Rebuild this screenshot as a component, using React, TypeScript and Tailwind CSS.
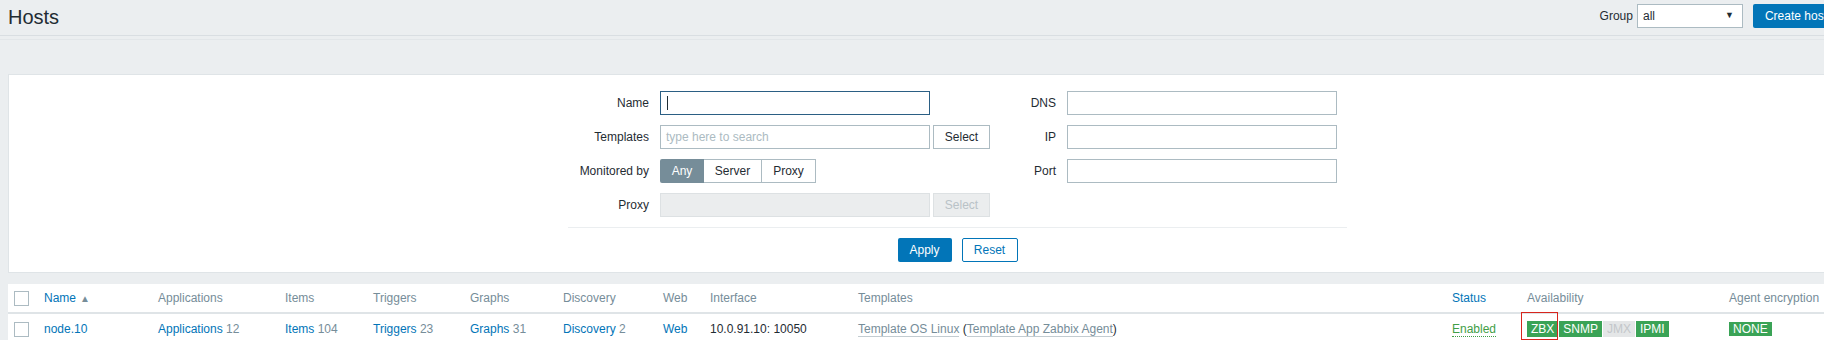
import React from 'react'

const cols =
  'grid grid-cols-[30px_114px_127px_88px_97px_93px_100px_47px_148px_594px_75px_202px_1fr] items-center'

function Box({ className = '', children }: { className?: string; children?: React.ReactNode }) {
  return (
    <div className={`w-[270px] h-[24px] border border-[#acbbc2] bg-white flex items-center px-[5px] ${className}`}>
      {children}
    </div>
  )
}

function Check() {
  return <div className="w-[15px] h-[15px] border border-[#acbbc2] bg-white" />
}

function Badge({ label, off }: { label: string; off?: boolean }) {
  return (
    <span
      className={`h-[16px] leading-[16px] px-[4px] text-[12px] ${
        off ? 'bg-[#e4e6e7] text-[#c3c7ca]' : 'bg-[#3aa356] text-white'
      }`}
    >
      {label}
    </span>
  )
}

function Row({ label, width, children }: { label: string; width: string; children?: React.ReactNode }) {
  return (
    <div className="flex items-center h-[24px]">
      <div className={`${width} mr-[11px] text-right text-[#1f2c33]`}>{label}</div>
      {children}
    </div>
  )
}

export default function App() {
  return (
    <div className="w-full h-[340px] overflow-hidden bg-[#ebeef0] font-['Liberation_Sans',Arial,sans-serif] text-[12px] text-[#1f2c33]">
      <div className="w-[1847px] relative">
        {/* header */}
        <div className="h-[36px] border-b border-[#d9dee2] px-[8px] flex justify-between items-start">
          <h1 className="pt-[7px] text-[20px] leading-[20px] text-[#1f2c33]">Hosts</h1>
          <div className="mt-[4px] flex items-center">
            <span className="mr-[4px]">Group</span>
            <div className="w-[106px] h-[24px] border border-[#acbbc2] bg-white flex items-center justify-between pl-[5px] pr-[8px]">
              <span>all</span>
              <span className="text-[9px] text-[#1f2c33]">▼</span>
            </div>
            <button className="ml-[10px] h-[24px] px-[12px] bg-[#0275b8] text-white rounded-[2px] whitespace-nowrap">
              Create host
            </button>
          </div>
        </div>
        <div className="mt-[3px] h-px bg-[#e2e6e9]" />

        {/* filter */}
        <div className="mt-[34px] mx-[8px] border border-[#dfe4e7] bg-white pt-[16px] pb-[10px]">
          <div className="ml-[559px] w-[779px]">
            <div className="flex">
              {/* left column */}
              <div className="flex flex-col gap-[10px] w-[422px]">
                <Row label="Name" width="w-[81px]">
                  <div className="w-[270px] h-[24px] border border-[#2b5f84] bg-white flex items-center px-[6px]">
                    <div className="w-px h-[14px] bg-[#1f2c33]" />
                  </div>
                </Row>
                <Row label="Templates" width="w-[81px]">
                  <Box>
                    <span className="text-[#acbbc2]">type here to search</span>
                  </Box>
                  <div className="ml-[3px] w-[57px] h-[24px] border border-[#acbbc2] bg-white flex items-center justify-center">
                    Select
                  </div>
                </Row>
                <Row label="Monitored by" width="w-[81px]">
                  <div className="flex h-[24px]">
                    <div className="w-[44px] bg-[#768d99] text-white flex items-center justify-center rounded-l-[2px]">Any</div>
                    <div className="w-[58px] border-y border-r border-[#acbbc2] bg-white flex items-center justify-center">Server</div>
                    <div className="w-[54px] border-y border-r border-[#acbbc2] bg-white flex items-center justify-center">Proxy</div>
                  </div>
                </Row>
                <Row label="Proxy" width="w-[81px]">
                  <div className="w-[270px] h-[24px] border border-[#dde1e3] bg-[#ebedee]" />
                  <div className="ml-[3px] w-[57px] h-[24px] border border-[#dde1e3] bg-[#ebedee] text-[#b9c2c7] flex items-center justify-center">
                    Select
                  </div>
                </Row>
              </div>

              {/* right column */}
              <div className="flex flex-col gap-[10px]">
                <Row label="DNS" width="w-[66px]">
                  <Box />
                </Row>
                <Row label="IP" width="w-[66px]">
                  <Box />
                </Row>
                <Row label="Port" width="w-[66px]">
                  <Box />
                </Row>
              </div>
            </div>

            <div className="mt-[10px] h-px bg-[#ebeef0]" />
            <div className="mt-[10px] flex justify-center gap-[10px]">
              <button className="w-[54px] h-[24px] bg-[#0275b8] text-white rounded-[2px]">Apply</button>
              <button className="w-[56px] h-[24px] border border-[#0275b8] text-[#0275b8] bg-white rounded-[2px]">Reset</button>
            </div>
          </div>
        </div>

        {/* table */}
        <div className="mt-[11px] mx-[8px] bg-white relative">
          <div className={`${cols} h-[30px] border-b-2 border-[#dfe4e7] pl-[6px] text-[#768d99]`}>
            <Check />
            <div className="text-[#0275b8]">
              Name<span className="ml-[4px] text-[10px] text-[#768d99]">▲</span>
            </div>
            <div>Applications</div>
            <div>Items</div>
            <div>Triggers</div>
            <div>Graphs</div>
            <div>Discovery</div>
            <div>Web</div>
            <div>Interface</div>
            <div>Templates</div>
            <div className="text-[#0275b8]">Status</div>
            <div>Availability</div>
            <div className="whitespace-nowrap">Agent encryption</div>
          </div>
          <div className={`${cols} h-[30px] pl-[6px]`}>
            <Check />
            <div className="text-[#0275b8]">node.10</div>
            <div>
              <span className="text-[#0275b8]">Applications</span> <span className="text-[#768d99]">12</span>
            </div>
            <div>
              <span className="text-[#0275b8]">Items</span> <span className="text-[#768d99]">104</span>
            </div>
            <div>
              <span className="text-[#0275b8]">Triggers</span> <span className="text-[#768d99]">23</span>
            </div>
            <div>
              <span className="text-[#0275b8]">Graphs</span> <span className="text-[#768d99]">31</span>
            </div>
            <div>
              <span className="text-[#0275b8]">Discovery</span> <span className="text-[#768d99]">2</span>
            </div>
            <div className="text-[#0275b8]">Web</div>
            <div>10.0.91.10: 10050</div>
            <div className="whitespace-nowrap">
              <span className="text-[#768d99] border-b border-[#c3ccd1]">Template OS Linux</span> (
              <span className="text-[#768d99] border-b border-[#c3ccd1]">Template App Zabbix Agent</span>)
            </div>
            <div>
              <span className="text-[#429e47] border-b border-dotted border-[#429e47]">Enabled</span>
            </div>
            <div className="flex gap-px">
              <Badge label="ZBX" />
              <Badge label="SNMP" />
              <Badge label="JMX" off />
              <Badge label="IPMI" />
            </div>
            <div>
              <Badge label="NONE" />
            </div>
          </div>
          {/* annotation box */}
          <div className="absolute left-[1513px] top-[28px] w-[37px] h-[28px] border border-[#d7261e]" />
        </div>
      </div>
    </div>
  )
}
